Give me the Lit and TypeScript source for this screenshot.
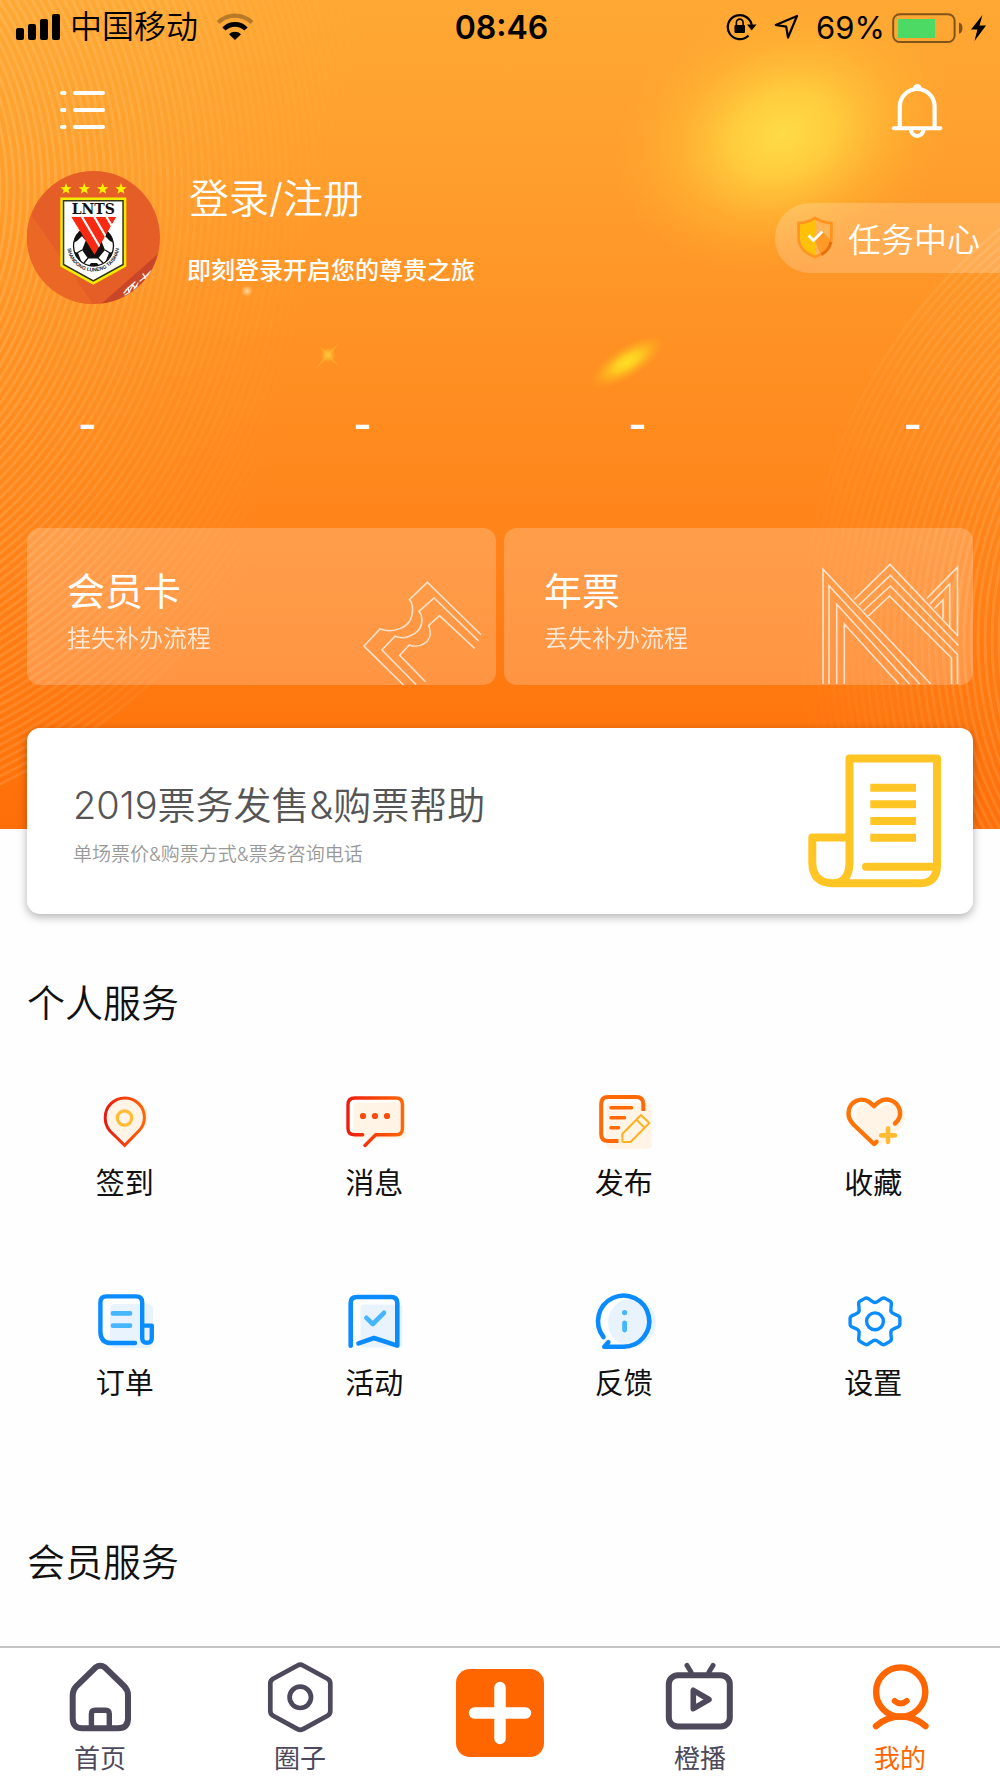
import { LitElement, html, svg, css } from "lit";
import type { TemplateResult } from "lit";
import { customElement, state } from "lit/decorators.js";
import { classMap } from "lit/directives/class-map.js";

interface Entry {
  label: string;
  icon: TemplateResult;
}

/* Outline of the six-toothed settings gear, built from polar points. */
const gearOutline = (cx: number, cy: number): string => {
  const at = (deg: number, r: number) => {
    const a = (deg * Math.PI) / 180;
    return `${(cx + r * Math.cos(a)).toFixed(2)} ${(cy + r * Math.sin(a)).toFixed(2)}`;
  };
  let d = "";
  for (let k = 0; k < 6; k++) {
    const t = k * 60;
    d += `${k ? "L" : "M"}${at(t - 13, 24)} Q${at(t - 10, 25.5)} ${at(t - 5, 25)} L${at(t + 5, 25)} Q${at(t + 10, 25.5)} ${at(t + 13, 24)} `;
    d += `L${at(t + 21, 20.5)} Q${at(t + 30, 17.5)} ${at(t + 39, 20.5)} `;
  }
  return d + "Z";
};

const starPoints = (cx: number, cy: number, r: number): string =>
  Array.from({ length: 10 }, (_, i) => {
    const a = (-90 + i * 36) * (Math.PI / 180);
    const q = i % 2 ? r * 0.42 : r;
    return `${(cx + q * Math.cos(a)).toFixed(2)},${(cy + q * Math.sin(a)).toFixed(2)}`;
  }).join(" ");

const rings = (cx: number, cy: number, from: number, count: number, step: number) =>
  Array.from({ length: count }, (_, i) => svg`<circle cx=${cx} cy=${cy} r=${from + i * step} />`);

const heroArt = html`
  <svg class="hero-art" viewBox="0 0 1000 829" preserveAspectRatio="xMidYMid slice" aria-hidden="true">
    <defs>
      <radialGradient id="glow">
        <stop offset="0" stop-color="#ffdb46" />
        <stop offset=".3" stop-color="#ffd440" stop-opacity=".85" />
        <stop offset=".65" stop-color="#ffc438" stop-opacity=".36" />
        <stop offset="1" stop-color="#ffb030" stop-opacity="0" />
      </radialGradient>
      <radialGradient id="streak">
        <stop offset="0" stop-color="#ffe026" />
        <stop offset=".35" stop-color="#ffd622" stop-opacity=".85" />
        <stop offset="1" stop-color="#ffb01e" stop-opacity="0" />
      </radialGradient>
      <radialGradient id="spark">
        <stop offset="0" stop-color="#ffd24a" />
        <stop offset="1" stop-color="#ffb52a" stop-opacity="0" />
      </radialGradient>
      <radialGradient id="mote">
        <stop offset="0" stop-color="#ffe3b0" stop-opacity=".9" />
        <stop offset="1" stop-color="#ffd090" stop-opacity="0" />
      </radialGradient>
      <linearGradient id="fadeLeft" x1="0" y1="0" x2="1000" y2="200" gradientUnits="userSpaceOnUse">
        <stop offset="0" stop-color="#fff" />
        <stop offset=".15" stop-color="#fff" stop-opacity=".75" />
        <stop offset=".36" stop-color="#fff" stop-opacity="0" />
      </linearGradient>
      <linearGradient id="fadeRight" x1="790" y1="0" x2="1000" y2="0" gradientUnits="userSpaceOnUse">
        <stop offset="0" stop-color="#fff" stop-opacity="0" />
        <stop offset="1" stop-color="#fff" />
      </linearGradient>
      <mask id="maskLeft"><rect width="1000" height="829" fill="url(#fadeLeft)" /></mask>
      <mask id="maskRight"><rect width="1000" height="829" fill="url(#fadeRight)" /></mask>
    </defs>
    <g mask="url(#maskLeft)" fill="none" stroke="#ffe0a0" stroke-opacity=".22" stroke-width="3">
      ${rings(-290, 190, 290, 54, 7)}
    </g>
    <g mask="url(#maskRight)" fill="none" stroke="#ffd9a0" stroke-opacity=".18" stroke-width="3">
      ${rings(1330, 640, 310, 32, 7)}
    </g>
    <ellipse cx="783" cy="134" rx="175" ry="134" fill="url(#glow)" transform="rotate(-22 783 134)" />
    <ellipse cx="627" cy="362" rx="42" ry="16" fill="url(#streak)" transform="rotate(-32 627 362)" />
    <circle cx="328" cy="355" r="8" fill="url(#spark)" />
    <path d="M319 346 L328 353 L340 342 L330 355 L339 367 L328 357 L316 369 L326 355Z" fill="#ffc02c" fill-opacity=".5" />
    <circle cx="247" cy="291" r="6" fill="url(#mote)" />
  </svg>
`;

const signalIcon = html`
  <svg width="44" height="26" viewBox="0 0 44 26" aria-hidden="true">
    <rect x="0" y="14" width="8" height="12" rx="2" />
    <rect x="12" y="10" width="8" height="16" rx="2" />
    <rect x="24" y="5" width="8" height="21" rx="2" />
    <rect x="36" y="0" width="8" height="26" rx="2" />
  </svg>
`;

const wifiIcon = html`
  <svg width="38" height="28" viewBox="0 0 38 28" aria-hidden="true">
    <path d="M2 9.6 A24 24 0 0 1 36 9.6" fill="none" stroke="#000" stroke-opacity=".28" stroke-width="4.2" />
    <path d="M8 16 A15.5 15.5 0 0 1 30 16" fill="none" stroke="#000" stroke-width="4.6" />
    <path d="M19 27 L13 21.3 A8.6 8.6 0 0 1 25 21.3 Z" />
  </svg>
`;

const rotationLockIcon = html`
  <svg width="31" height="28" viewBox="0 0 31 28" aria-hidden="true">
    <path d="M25.8 13.5 A12 12 0 1 0 22.5 22.4" fill="none" stroke="#000" stroke-width="2.2" />
    <path d="M21 11.5 H30.5 L25.7 17.5 Z" />
    <rect x="8.5" y="12" width="10.5" height="8" rx="1" />
    <path d="M10.4 12.5 V9.5 a3.3 3.3 0 0 1 6.7 0 V12.5" fill="none" stroke="#000" stroke-width="1.6" />
  </svg>
`;

const locationIcon = html`
  <svg width="25" height="26" viewBox="0 0 25 26" aria-hidden="true">
    <path d="M23 2 L14 23.5 L12.2 12.6 L1.8 11 Z" fill="none" stroke="#000" stroke-width="2.2" stroke-linejoin="round" />
  </svg>
`;

const batteryIcon = html`
  <svg width="72" height="30" viewBox="0 0 72 30" role="img" aria-label="69%">
    <rect x="1.2" y="1.2" width="61.4" height="27.8" rx="6.5" fill="none" stroke="#000" stroke-opacity=".5" stroke-width="2" />
    <rect x="6" y="6" width="37" height="19" fill="#4cd964" />
    <path d="M67 9.5 q3.5 1 3.5 5.6 q0 4.6 -3.5 5.6 Z" fill="#000" fill-opacity=".5" />
  </svg>
`;

const boltIcon = html`
  <svg width="16" height="26" viewBox="0 0 16 26" aria-hidden="true">
    <path d="M11.5 0 L0 14.6 H6.4 L3.5 26 L15 10.5 H8.4 Z" />
  </svg>
`;

const listIcon = html`
  <svg width="46" height="40" viewBox="0 0 46 40" aria-hidden="true">
    <g stroke="#fff" stroke-width="4" stroke-linecap="round">
      <path d="M2 2 H4.5 M15 2 H43 M2 19 H4.5 M15 19 H43 M2 36 H4.5 M15 36 H43" />
    </g>
  </svg>
`;

const bellIcon = html`
  <svg width="52" height="56" viewBox="0 0 52 56" aria-hidden="true">
    <g fill="none" stroke="#fff" stroke-width="4.2" stroke-linecap="round">
      <path d="M8.8 44 V23.5 A17.4 17.5 0 0 1 43.6 23.5 V44" />
      <path d="M2.8 45.2 H49.4" stroke-width="4" />
      <path d="M19.8 46 A6.4 7 0 0 0 32.6 46" />
    </g>
    <path d="M22 5.5 a4.3 4.6 0 0 1 8.6 0 Z" fill="#fff" />
  </svg>
`;

const avatarArt = html`
  <svg class="avatar-art" viewBox="0 0 133 133" role="img" aria-label="LNTS">
    <defs>
      <clipPath id="disc"><circle cx="66.5" cy="66.5" r="66.5" /></clipPath>
      <clipPath id="wedge"><path d="M44 45.7 H89.5 L67.5 84 Z" /></clipPath>
      <clipPath id="ball"><circle cx="66.5" cy="75" r="20" /></clipPath>
      <path id="motto" d="M40.5 78 A26 26 0 0 0 92 78" />
    </defs>
    <g clip-path="url(#disc)">
      <rect width="133" height="133" fill="#e55e27" />
      <path d="M0 38 L8 49 L66 133 H0 Z" fill="#ea6726" />
      <path d="M132 82 L74 133 H133 Z" fill="#c94628" />
      <path d="M97 122 l4 -5 l1 4 l4 -7 l2 3 l3 -5 M99 119 l9 -8 M113 110 l5 -4 l1 3 l3 -7 l4 -1 M116 103 l2 3 l6 -6 M98 124 l5 -3 M107 118 l3 -3"
        fill="none" stroke="#fff" stroke-opacity=".9" stroke-width="1.4" stroke-linejoin="round" stroke-linecap="round" />
    </g>
    ${[39, 57.3, 75.7, 94].map((x) => svg`<polygon points=${starPoints(x, 18, 6)} fill="#fff100" />`)}
    <path d="M33.3 26.5 H99.3 V95.5 L66.3 113.8 L33.3 95.5 Z" fill="#f4ec00" />
    <path d="M35.8 29 H96.8 V94 L66.3 110.8 L35.8 94 Z" fill="#33331a" />
    <path d="M37.3 30.5 H95.3 V93 L66.3 109 L37.3 93 Z" fill="#fff" />
    <text class="crest-name" x="66.3" y="43" text-anchor="middle">LNTS</text>
    <circle cx="66.5" cy="75" r="20" fill="#fff" />
    <g clip-path="url(#ball)">
      <path d="M59 69 H74 L78 79 L71 87.5 H61 L55 79 Z" fill="#111" />
      <path d="M46 61 L55 58 L57 63 L50 70 L46 72 Z M87 61 L78 58 L76 63 L83 70 L87 72 Z M60 55 H73 L71 62 H62 Z" fill="#111" />
      <path d="M45 80 L51 82 L55 92 L50 96 Z M88 80 L82 82 L78 92 L83 96 Z M60 97 L64 92 H70 L74 97 Z" fill="#111" />
      <path d="M55 79 L50 82 M78 79 L83 82 M61 87 L57 92 M71 87 L76 92 M59 69 L55 64 M74 69 L78 64" stroke="#111" stroke-width="1.3" />
    </g>
    <circle cx="66.5" cy="75" r="20" fill="none" stroke="#111" stroke-width="1.3" />
    <g clip-path="url(#wedge)">
      <path d="M44 45.7 H89.5 L67.5 84 Z" fill="#fa2a12" />
      <path d="M54.5 45 L77 83 M66.8 45 L89 83 M79 45 L101 83" stroke="#fff" stroke-width="2.2" />
    </g>
    <text class="crest-motto"><textPath href="#motto" startOffset="50%" text-anchor="middle">SHANDONG LUNENG TAISHAN</textPath></text>
  </svg>
`;

const shieldIcon = html`
  <svg width="36" height="43" viewBox="0 0 36 43" aria-hidden="true">
    <path d="M18 1.5 L34.4 7.5 V22 Q34.4 35 18 41.5 Q1.6 35 1.6 22 V7.5 Z" fill="#ffb458" />
    <path d="M18 3 L3 8.5 V22 Q3 33.5 18 40 Z" fill="#ffc10a" />
    <path d="M17.8 24.6 L26.5 16 L34 25 Q32 34 24 39.5 Z" fill="#ff9a28" />
    <path d="M18 1.8 Q25 6.8 34.4 7 V22 Q34.4 35 18 41 Q1.6 35 1.6 22 V7 Q11 6.8 18 1.8 Z" fill="none" stroke="#ff9420" stroke-width="2.8" stroke-linejoin="round" />
    <path d="M34 26 Q32 34.5 24.5 38.5" fill="none" stroke="#e8700c" stroke-width="3" />
    <path d="M11.6 19.5 L16.4 24.4 L25.3 15.4" fill="none" stroke="#fff" stroke-width="2.8" />
  </svg>
`;

const ticketArt = html`
  <svg class="card-art" width="120" height="104" viewBox="0 0 120 104" aria-hidden="true">
    <g fill="none" stroke="#fff" stroke-opacity=".72" stroke-width="1.6">
      <path d="M40.5 104 L1 65 L17 48 C28 52 50 49 49.5 28 Q49.5 22 46.5 18.5 L64.3 1.3 L118 53.7" />
      <path d="M53 103.5 L19 69 L32 55.3 C44 60 61 51 58.7 37 Q58.5 33 56 30.3 L71 17 L115.7 60" />
      <path d="M62.7 101 L36.7 74.3 L46.3 64 C56 68 69 61 67 50 Q66.8 47 65.7 44.5 L76.5 34.7 L111.7 67.5" />
    </g>
  </svg>
`;

const crownArt = html`
  <svg class="card-art" width="138" height="122" viewBox="0 0 138 122" aria-hidden="true">
    <g fill="none" stroke="#fff" stroke-opacity=".72" stroke-width="1.6">
      <path d="M1 121 V6.3 L108.7 121" />
      <path d="M7 121 V22.7 L97.7 121" />
      <path d="M14.7 121 V41.3 L87.5 121" />
      <path d="M22.3 121 V61 L76.7 121" />
      <path d="M32.3 36.5 L68 1.5 L136 73" />
      <path d="M37 42 L68.3 12.3 L136.5 82.5" />
      <path d="M41.7 47.5 L68.3 23 L135.5 91.5 V121" />
      <path d="M46.3 53 L67.5 33 L129.5 95 V121" />
      <path d="M104.7 35.5 L135.5 4.3 V72.5" />
      <path d="M108 41 L127.7 21 V63.5" />
      <path d="M112.3 45.5 L121 37 V55.5" />
    </g>
  </svg>
`;

const scrollArt = html`
  <svg width="134" height="134" viewBox="0 0 134 134" aria-hidden="true">
    <g fill="none" stroke="#ffc524" stroke-width="8" stroke-linejoin="round">
      <path d="M41.5 83.5 H4.3 V109 Q4.8 129 25 129.3 H112 Q128.5 129 129 112 V4.5 H41.5 V109 Q41 129 25 129.3" />
      <path d="M58 112.7 H128" stroke-linecap="round" />
      <path d="M62.3 33.7 H108 M62.3 50.3 H108 M62.3 67 H108 M62.3 83.7 H108" />
    </g>
  </svg>
`;

const checkInIcon = html`
  <svg class="icon" viewBox="0 0 64 64" aria-hidden="true">
    <defs>
      <linearGradient id="ember1" x1="12" y1="0" x2="52" y2="0" gradientUnits="userSpaceOnUse">
        <stop offset="0" stop-color="#ea1a10" /><stop offset="1" stop-color="#ff6606" />
      </linearGradient>
    </defs>
    <path d="M34.5 55 L20 41.5 C16.5 38 15 33 15 28.5 A20 20 0 0 1 55 28.5 C55 33 52 38 48.5 41.5 Z" fill="#fff4e5" />
    <path d="M31.7 56.3 L17 42 C13.5 38 12.2 33.5 12.2 28.5 A19.6 19.6 0 0 1 51.4 28.5 C51.4 33 49.5 38 46.2 41.5 Z"
      fill="none" stroke="url(#ember1)" stroke-width="3" />
    <circle cx="31.5" cy="29" r="7.2" fill="none" stroke="#ffbb33" stroke-width="3.2" />
  </svg>
`;

const messageIcon = html`
  <svg class="icon" viewBox="0 0 64 64" aria-hidden="true">
    <defs>
      <linearGradient id="ember2" x1="5" y1="0" x2="61" y2="0" gradientUnits="userSpaceOnUse">
        <stop offset="0" stop-color="#ec1c10" /><stop offset="1" stop-color="#ff6606" />
      </linearGradient>
    </defs>
    <rect x="11.5" y="13.5" width="52.5" height="36" rx="3" fill="#fff4e5" />
    <path d="M20.7 45.8 H13 Q6 45.8 6 39.5 V15.5 Q6 9 13 9 H54 Q60.4 9 60.4 15.5 V39.5 Q60.4 45.8 54 45.8 H33.7 L23 56.5"
      fill="none" stroke="url(#ember2)" stroke-width="3.4" stroke-linecap="round" stroke-linejoin="round" />
    <g fill="#f84a0a">
      <circle cx="21" cy="27" r="3.1" /><circle cx="33" cy="27" r="3.1" /><circle cx="45" cy="27" r="3.1" />
    </g>
  </svg>
`;

const publishIcon = html`
  <svg class="icon" viewBox="0 0 64 64" aria-hidden="true">
    <rect x="14" y="14" width="46" height="46" rx="5" fill="#fff4e5" />
    <path d="M51.3 22 V15 Q51.3 8 44 8 H16 Q9.2 8 9.2 15 V45 Q9.2 52 16 52 H26.5" fill="none" stroke="#ff6a06" stroke-width="4" />
    <path d="M19 18.7 H39.5 M19 28.7 H32.5 M19 38.7 H26.5" stroke="#ff6a06" stroke-width="3.6" stroke-linecap="round" />
    <path d="M30.3 45 L49 26 L57.3 34 L38.6 53 H31.5 Q30.3 53 30.3 51.8 Z M44.6 30.7 L52.4 38.6" fill="none" stroke="#ffb11f" stroke-width="2" stroke-linejoin="round" />
  </svg>
`;

const favouriteIcon = html`
  <svg class="icon" viewBox="0 0 64 64" aria-hidden="true">
    <path d="M38 57 L19 38 C12 30 14 18 22 15 C28 13 33 17 38 20 C44 14 56 13 62 20 C66 27 64 34 59 40 Z" fill="#fff4e5" />
    <path d="M54 34.5 C58.5 30.5 59.8 26 58.8 21.5 C56.5 11.5 45.5 7.5 37.5 13.2 L33 17.2 L28.5 13.2 C20 7.5 8 12 7.5 24 C7.3 29 9.5 32.5 13 36 L33 55 L35.5 52.8"
      fill="none" stroke="#ff7206" stroke-width="4.4" stroke-linecap="round" stroke-linejoin="round" />
    <path d="M47 39.5 V53 M40.2 46.4 H54" stroke="#ffbb33" stroke-width="4.6" stroke-linecap="round" />
  </svg>
`;

const orderIcon = html`
  <svg class="icon" viewBox="0 0 64 64" aria-hidden="true">
    <rect x="17" y="15" width="43" height="44" rx="5" fill="#e8f3fe" />
    <path d="M49.2 36.6 H58.8 V49 Q58.8 53.8 54 53.8 Q49.2 53.8 49.2 49 V13.5 Q49.2 7.4 43 7.4 H13.5 Q7.4 7.4 7.4 13.5 V43.5 Q8 54 18 54 H42"
      fill="none" stroke="#0a8cff" stroke-width="4.4" stroke-linecap="round" stroke-linejoin="round" />
    <path d="M20 24.4 H37 M20 36.7 H37" stroke="#45b6ff" stroke-width="4.8" stroke-linecap="round" />
  </svg>
`;

const activityIcon = html`
  <svg class="icon" viewBox="0 0 64 64" aria-hidden="true">
    <rect x="18.5" y="15.5" width="42" height="43" rx="4" fill="#e8f3fe" />
    <path d="M8.7 56.8 V14 Q8.7 8 15 8 H49 Q55.3 8 55.3 14 V56.6 L32 49 L16.5 54.4"
      fill="none" stroke="#0a8cff" stroke-width="4.6" stroke-linecap="round" stroke-linejoin="round" />
    <path d="M24.4 28.8 L30.8 35 L42 23.8" fill="none" stroke="#45b6ff" stroke-width="4.6" stroke-linecap="round" stroke-linejoin="round" />
  </svg>
`;

const feedbackIcon = html`
  <svg class="icon" viewBox="0 0 64 64" aria-hidden="true">
    <circle cx="40" cy="33.5" r="24" fill="#e8f3fe" />
    <path d="M11.5 48 A25.6 25.6 0 1 1 31.3 57.8 H12.3 L16.3 53.3"
      fill="none" stroke="#0a8cff" stroke-width="4.6" stroke-linecap="round" stroke-linejoin="round" />
    <circle cx="32.6" cy="23.6" r="2.6" fill="#45b6ff" />
    <path d="M32.6 34 V41" stroke="#45b6ff" stroke-width="4.8" stroke-linecap="round" />
  </svg>
`;

const settingsIcon = html`
  <svg class="icon" viewBox="0 0 64 64" aria-hidden="true">
    <g fill="none" stroke="#0a8cff" stroke-width="3.4" stroke-linejoin="round">
      <path d=${gearOutline(34, 32.3)} />
      <circle cx="34" cy="32.3" r="8.4" />
    </g>
  </svg>
`;

const homeIcon = html`
  <svg class="tab-icon" viewBox="0 0 72 72" aria-hidden="true">
    <g fill="none" stroke="currentColor" stroke-width="6">
      <path d="M31.5 6.5 Q36.3 3 41 6.5 L60 25 Q64 29 64 34 V57.5 Q64 67.3 54 67.3 H18.5 Q8.7 67.3 8.7 57.5 V34 Q8.7 29 12.5 25 Z" />
      <path d="M27.4 67 V53 Q27.4 49.2 31 49.2 H41.6 Q45.3 49.2 45.3 53 V67" stroke-width="5.4" />
    </g>
  </svg>
`;

const circleIcon = html`
  <svg class="tab-icon" viewBox="0 0 72 72" aria-hidden="true">
    <g fill="none" stroke="currentColor" stroke-width="4.7">
      <path d="M33.5 4.5 Q36.3 2.8 39.1 4.5 L63.5 17.8 Q66.3 19.4 66.3 22.6 V50 Q66.3 53.2 63.5 54.8 L39.1 68.1 Q36.3 69.8 33.5 68.1 L9.1 54.8 Q6.3 53.2 6.3 50 V22.6 Q6.3 19.4 9.1 17.8 Z" />
      <circle cx="36.3" cy="36.3" r="10.7" />
    </g>
  </svg>
`;

const videoIcon = html`
  <svg class="tab-icon" viewBox="0 0 72 72" aria-hidden="true">
    <g fill="none" stroke="currentColor" stroke-width="6" stroke-linejoin="round" stroke-linecap="round">
      <rect x="4.8" y="14.2" width="61" height="51.2" rx="9" />
      <path d="M23 4.5 L27 11 M49 4.5 L45 11" stroke-width="5" />
      <path d="M29.3 29.3 V47.7 L45 38.5 Z" stroke-width="5.6" />
    </g>
  </svg>
`;

const mineIcon = html`
  <svg class="tab-icon" viewBox="0 0 72 72" aria-hidden="true">
    <g fill="none" stroke="currentColor" stroke-width="6.4" stroke-linecap="round">
      <circle cx="36.7" cy="31" r="24.6" />
      <path d="M30.7 40 Q36.7 45 42.7 40" stroke-width="6" />
      <path d="M12 65.2 Q22.5 55.5 36.7 55.5 Q51 55.5 61.5 65.2" />
    </g>
  </svg>
`;

const plusIcon = html`
  <svg width="64" height="64" viewBox="0 0 64 64" aria-hidden="true">
    <path d="M32 6.5 V57.5 M6.5 32 H57.5" stroke="#fff" stroke-width="11.5" stroke-linecap="round" />
  </svg>
`;

@customElement("app-root")
export class AppRoot extends LitElement {
  @state() private activeTab = "我的";

  private readonly services: Entry[] = [
    { label: "签到", icon: checkInIcon },
    { label: "消息", icon: messageIcon },
    { label: "发布", icon: publishIcon },
    { label: "收藏", icon: favouriteIcon },
    { label: "订单", icon: orderIcon },
    { label: "活动", icon: activityIcon },
    { label: "反馈", icon: feedbackIcon },
    { label: "设置", icon: settingsIcon },
  ];

  static styles = css`
    :host {
      display: block;
      font-family: Inter, "Noto Sans CJK SC", sans-serif;
      color: #111;
    }
    * {
      box-sizing: border-box;
    }
    svg {
      display: block;
      flex: none;
    }
    h2 {
      margin: 0;
    }
    a {
      color: inherit;
      text-decoration: none;
    }
    button {
      margin: 0;
      padding: 0;
      border: 0;
      background: none;
      color: inherit;
      font: inherit;
      cursor: pointer;
    }
    .page {
      display: flex;
      flex-direction: column;
      min-height: 100vh;
      background: #fefefe;
    }

    .hero {
      position: relative;
      padding-bottom: 144px;
      color: #fff;
      background: linear-gradient(#ffa834 0%, #ff9f2d 20%, #ff9224 40%, #ff841a 64%, #ff7810 84%, #ff6e09 100%);
    }
    .hero-art {
      position: absolute;
      inset: 0;
      width: 100%;
      height: 100%;
    }
    .hero-body {
      position: relative;
    }

    .status {
      display: grid;
      grid-template-columns: 1fr auto 1fr;
      align-items: center;
      height: 54px;
      padding: 0 13px 0 16px;
      color: #000;
      font-size: 32px;
      line-height: 40px;
    }
    .status-side {
      display: flex;
      align-items: center;
    }
    .end {
      justify-content: flex-end;
      gap: 17px;
    }
    .carrier {
      margin: 0 18px 0 10px;
      font-weight: 350;
    }
    .time {
      padding-top: 2px;
      font-weight: 600;
    }
    .power {
      display: flex;
      align-items: center;
      gap: 7px;
      padding-top: 1px;
      font-size: 31px;
    }

    .nav {
      display: flex;
      justify-content: space-between;
      align-items: center;
      padding: 29px 57px 0 60px;
    }

    .profile {
      display: flex;
      align-items: center;
      gap: 27px;
      margin-top: 32px;
      padding-left: 27px;
    }
    .avatar-art {
      width: 133px;
      height: 133px;
    }
    .crest-name {
      font: bold 14px "DejaVu Serif", serif;
      fill: #111;
    }
    .crest-motto {
      font: bold 5px "Liberation Sans", sans-serif;
      fill: #222;
    }
    .login {
      display: flex;
      flex: 1;
      flex-direction: column;
      align-self: flex-start;
      gap: 29px;
    }
    .login-title {
      padding-left: 2px;
      font-size: 40px;
      line-height: 56px;
      font-weight: 350;
    }
    .login-note {
      font-size: 24px;
      line-height: 30px;
      font-weight: 500;
    }
    .tasks {
      display: flex;
      align-items: center;
      gap: 15px;
      height: 70px;
      padding: 0 20px 0 22px;
      border-radius: 35px 0 0 35px;
      background: rgba(255, 255, 255, 0.2);
      font-size: 33px;
      font-weight: 350;
    }

    .stats {
      display: flex;
      justify-content: space-between;
      margin: 91px 0 73px;
      padding: 0 78px;
      font-size: 40px;
      line-height: 60px;
      font-weight: 600;
    }

    .cards {
      display: grid;
      grid-template-columns: 1fr 1fr;
      gap: 8px;
      padding: 0 27px;
    }
    .card {
      display: flex;
      justify-content: space-between;
      height: 157px;
      padding: 39px 13px 0 40px;
      border-radius: 13px;
      background: rgba(255, 255, 255, 0.21);
    }
    .card-text {
      display: flex;
      flex-direction: column;
      gap: 8px;
    }
    .card-title {
      font-size: 38px;
      line-height: 48px;
      font-weight: 400;
    }
    .card-note {
      font-size: 24px;
      line-height: 32px;
      font-weight: 350;
      opacity: 0.8;
    }
    .card-art {
      align-self: flex-end;
    }

    .help {
      position: relative;
      display: flex;
      justify-content: space-between;
      align-items: center;
      margin: -101px 27px 0;
      padding: 26px 31px 26px 46px;
      border-radius: 13px;
      background: #fff;
      box-shadow: 0 3px 10px rgba(0, 0, 0, 0.3);
    }
    .help-text {
      display: flex;
      flex-direction: column;
      gap: 12px;
      padding-top: 8px;
    }
    .help-title {
      color: #555;
      font-size: 38px;
      line-height: 48px;
      font-weight: 350;
    }
    .help-note {
      color: #999;
      font-size: 19px;
      line-height: 28px;
      font-weight: 350;
    }

    .section-title {
      margin: 61px 27px 0;
      font-size: 38px;
      line-height: 56px;
      font-weight: 350;
    }
    .services {
      display: grid;
      grid-template-columns: repeat(4, 1fr);
      row-gap: 85px;
      margin: 58px 0 69px;
      padding-right: 2px;
    }
    .service {
      display: flex;
      flex-direction: column;
      align-items: center;
      gap: 11px;
      font-size: 29px;
      line-height: 40px;
      font-weight: 400;
    }
    .icon {
      width: 64px;
      height: 64px;
    }

    .tabs {
      display: grid;
      grid-template-columns: repeat(5, 1fr);
      align-items: start;
      margin-top: auto;
      padding: 13px 0 1px;
      border-top: 2px solid #c4c4c4;
      background: #fff;
    }
    .tab {
      display: flex;
      flex-direction: column;
      align-items: center;
      gap: 8px;
      color: #4d495a;
      font-size: 26px;
      line-height: 36px;
      font-weight: 400;
    }
    .tab.active {
      color: #ff6600;
    }
    .tab-icon {
      width: 72px;
      height: 72px;
    }
    .compose {
      display: grid;
      place-items: center;
      justify-self: center;
      width: 88px;
      height: 88px;
      margin-top: 8px;
      border-radius: 14px;
      background: #ff6600;
    }
  `;

  private renderTab(label: string, icon: TemplateResult) {
    return html`
      <button
        type="button"
        class=${classMap({ tab: true, active: this.activeTab === label })}
        @click=${() => (this.activeTab = label)}
      >
        ${icon}<span>${label}</span>
      </button>
    `;
  }

  render() {
    return html`
      <div class="page">
        <header class="hero">
          ${heroArt}
          <div class="hero-body">
            <div class="status">
              <div class="status-side">${signalIcon}<span class="carrier">中国移动</span>${wifiIcon}</div>
              <span class="time">08:46</span>
              <div class="status-side end">
                ${rotationLockIcon}${locationIcon}
                <span class="power"><span>69%</span>${batteryIcon}${boltIcon}</span>
              </div>
            </div>
            <nav class="nav">
              <button type="button" aria-label="菜单">${listIcon}</button>
              <button type="button" aria-label="通知">${bellIcon}</button>
            </nav>
            <div class="profile">
              ${avatarArt}
              <a class="login" href="#login">
                <span class="login-title">登录/注册</span>
                <span class="login-note">即刻登录开启您的尊贵之旅</span>
              </a>
              <a class="tasks" href="#tasks">${shieldIcon}<span>任务中心</span></a>
            </div>
            <div class="stats"><span>-</span><span>-</span><span>-</span><span>-</span></div>
            <div class="cards">
              <a class="card" href="#member-card">
                <span class="card-text">
                  <span class="card-title">会员卡</span>
                  <span class="card-note">挂失补办流程</span>
                </span>
                ${ticketArt}
              </a>
              <a class="card" href="#season-ticket">
                <span class="card-text">
                  <span class="card-title">年票</span>
                  <span class="card-note">丢失补办流程</span>
                </span>
                ${crownArt}
              </a>
            </div>
          </div>
        </header>

        <a class="help" href="#ticket-help">
          <span class="help-text">
            <span class="help-title">2019票务发售&amp;购票帮助</span>
            <span class="help-note">单场票价&amp;购票方式&amp;票务咨询电话</span>
          </span>
          ${scrollArt}
        </a>

        <h2 class="section-title">个人服务</h2>
        <div class="services">
          ${this.services.map(
            (s) => html`<button type="button" class="service">${s.icon}<span>${s.label}</span></button>`
          )}
        </div>
        <h2 class="section-title">会员服务</h2>

        <nav class="tabs">
          ${this.renderTab("首页", homeIcon)} ${this.renderTab("圈子", circleIcon)}
          <button type="button" class="compose" aria-label="发布">${plusIcon}</button>
          ${this.renderTab("橙播", videoIcon)} ${this.renderTab("我的", mineIcon)}
        </nav>
      </div>
    `;
  }
}
